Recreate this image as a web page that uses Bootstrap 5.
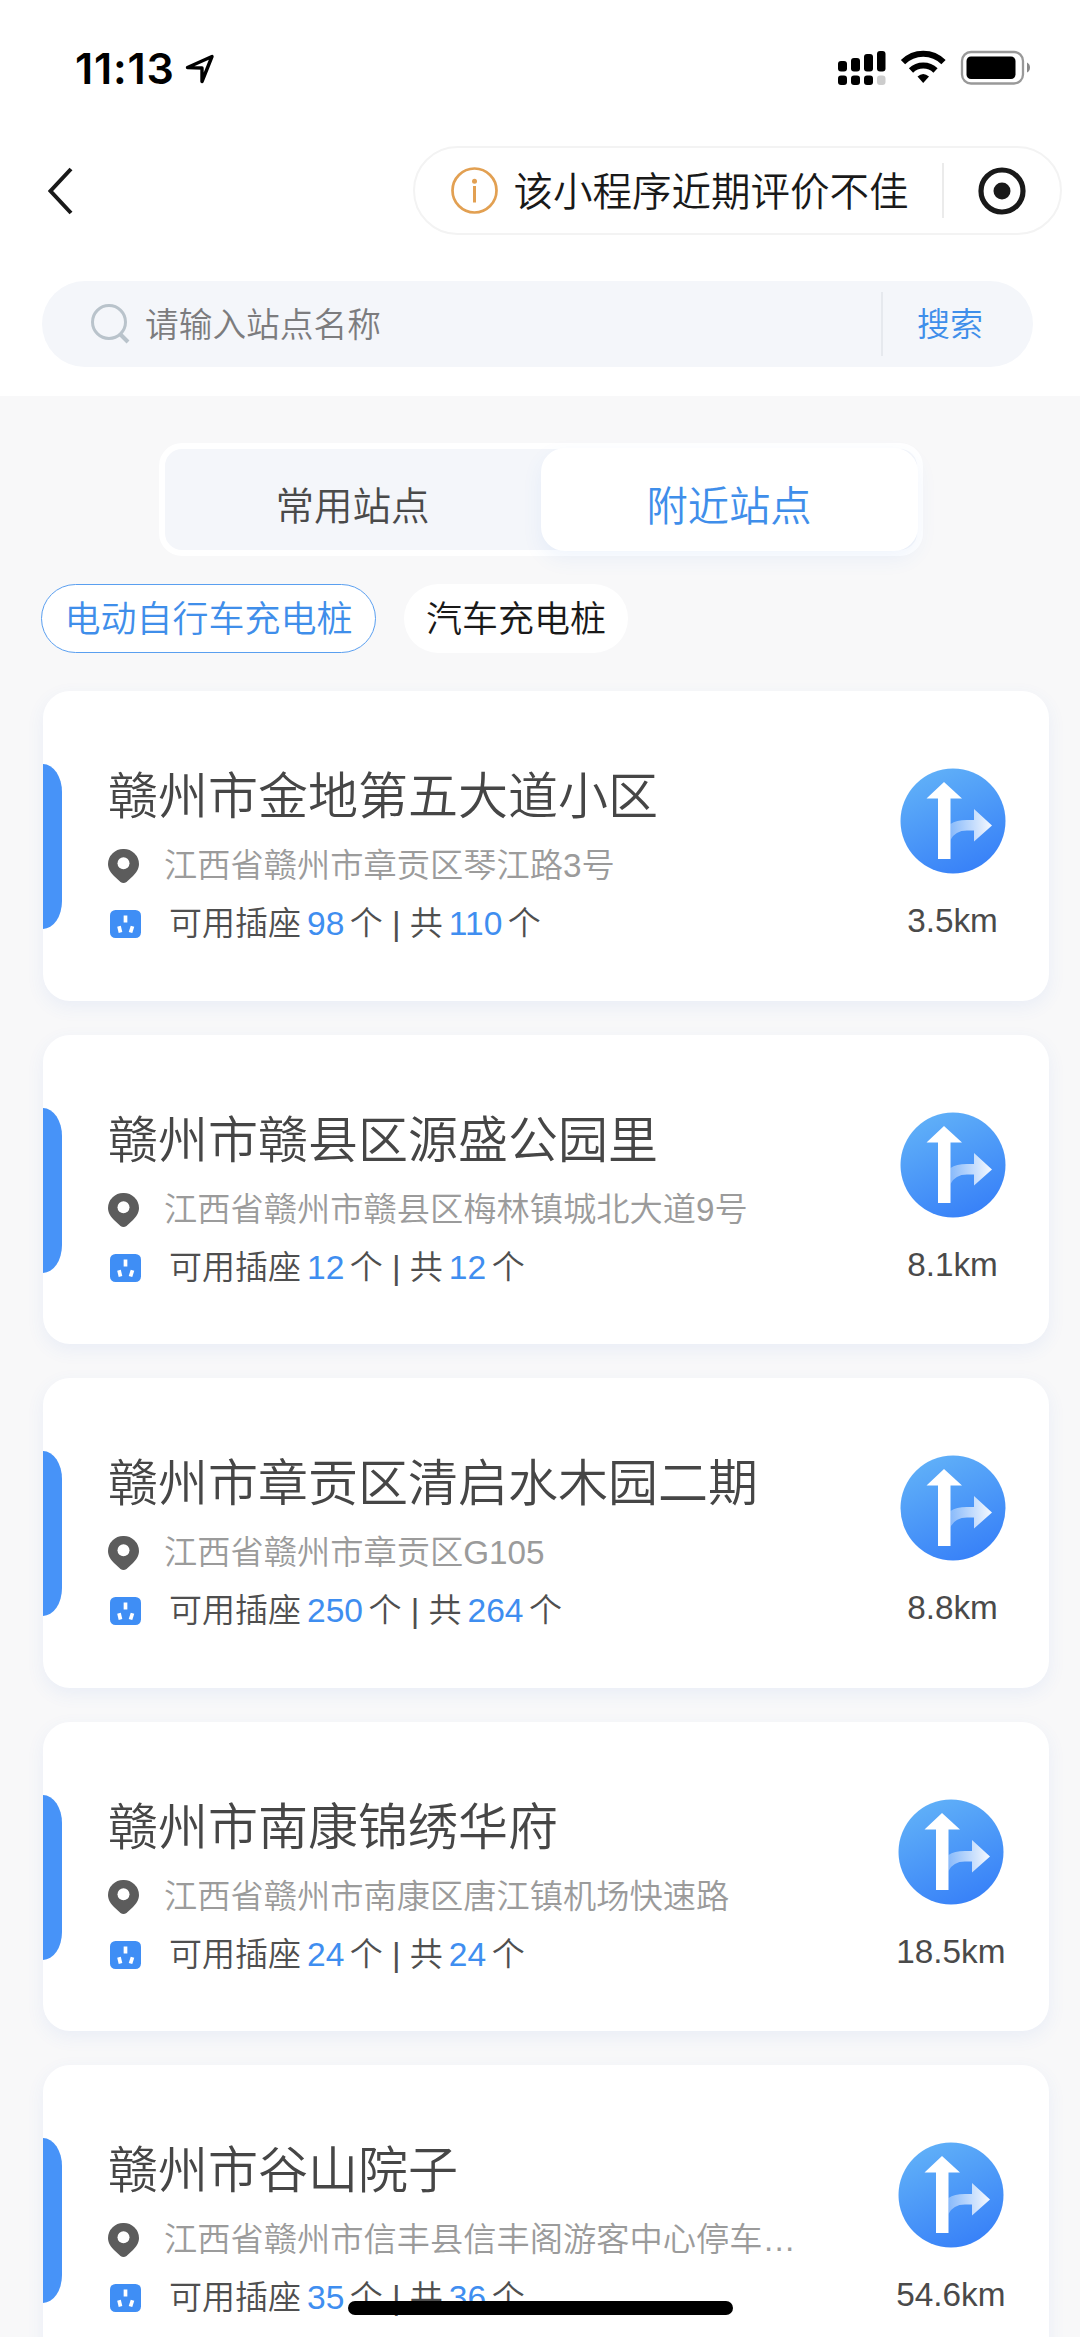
<!DOCTYPE html>
<html lang="zh-CN">
<head>
<meta charset="utf-8">
<meta name="viewport" content="width=device-width, initial-scale=1">
<title>附近站点</title>
<link href="https://cdn.jsdelivr.net/npm/bootstrap@5.3.0/dist/css/bootstrap.min.css" rel="stylesheet">
<style>
html,body{height:2337px;overflow:hidden}
body{background:#f8f8f9;font-family:"Liberation Sans","Noto Sans CJK SC",sans-serif;font-weight:350;color:#4a4a4a;width:1080px}
svg{display:block;flex:none}
.top-area{height:396px}
.status-row{height:136px;padding:0 49.5px 0 75px}
.clock{font:600 43px/50px Inter,sans-serif;letter-spacing:.8px;color:#000}
.nav-arrow{margin-left:10px}
.title-row{height:109px;padding:0 18.5px 0 48px}
.capsule{width:649px;height:89px;border:2px solid #f3f3f3;border-radius:45px;padding-left:36px;color:#191919}
.capsule-text{font-size:39.5px;line-height:50px;margin-left:16px;width:398px;padding-top:2px}
.capsule-line{width:2px;height:55px;background:#ebebeb;margin-left:30px}
.capsule-dot{margin-left:34px}
.search-box{margin:36px 47px 0 42px;height:86px;border-radius:43px;background:#f4f6fa;padding-left:49px;font-size:33.7px;line-height:50px}
.search-hint{color:#7c7c7e;margin-left:15px;padding-top:2px}
.search-line{width:2px;height:64px;background:#e6e9ee}
.search-go{width:150px;padding:2px 0 0 34px;color:#3f8eea;font-size:33px}
.tab-box{width:764px;height:113px;margin:47px 0 0 158.5px;border:6px solid #fff;border-radius:23px;background:#f4f6fa}
.tab-item{font-size:38.5px;line-height:50px;padding-top:15px}
.tab-on{width:377px;height:103px;margin-right:-1px;border-radius:24px;background:#fff;color:#3f8eea;font-size:41.3px;box-shadow:0 8px 20px rgba(60,130,235,.08)}
.pill-row{margin:28px 0 0 41px;gap:28px}
.pill{height:69px;border-radius:35px;background:#fff;color:#191919;font-size:36px;line-height:50px;width:224px;padding-top:2px}
.pill-on{width:335px;border:1.6px solid #5a9ff0;color:#3f8eea}
.station-list{margin:38px 31.5px 0 43px;gap:34px}
.station{height:309.5px;border-radius:27px;background:#fff;box-shadow:0 6px 18px rgba(60,110,220,.08);flex:none;padding-right:43px}
.station-mark{width:19px;height:165px;margin-top:73px;background:#4793f8;border-radius:0 19px 19px 0/0 28px 28px 0}
.station-info{margin-left:46px;padding-top:76px;width:720px}
.station-name{font-size:50px;line-height:60px;color:#464646}
.station-addr{font-size:33.25px;line-height:40px;color:#9b9b9b;margin-top:19px}
.station-addr span{margin-left:25px}
.station-sock{font-size:33px;line-height:40px;color:#4f4f4f;margin-top:18px;padding-left:2px}
.station-sock span{margin-left:28px;white-space:pre}
.station-sock b{font-weight:400;font-size:33.6px;color:#3f8ef0;margin:0 5.5px 0 6px}
.station-go{min-width:106px;padding-top:77px;font-size:33.3px;line-height:40px}
.station-go div{margin-top:27px}
.home-bar{position:absolute;left:348px;top:2301px;width:385px;height:14px;border-radius:7px;background:#000}
</style>
<script src="https://cdn.jsdelivr.net/npm/bootstrap@5.3.0/dist/js/bootstrap.bundle.min.js"></script>
</head>
<body class="position-relative m-0">
<svg width="0" height="0" class="position-absolute">
  <defs>
    <linearGradient id="disc" x1=".25" y1="0" x2=".7" y2="1"><stop offset="0" stop-color="#61b1f8"/><stop offset="1" stop-color="#3780f8"/></linearGradient>
    <linearGradient id="turn" x1="0" y1="0" x2="1" y2="0"><stop offset="0" stop-color="#fff" stop-opacity=".35"/><stop offset="1" stop-color="#fff" stop-opacity=".95"/></linearGradient>
    <symbol id="route" viewBox="0 0 106 106">
      <circle cx="53" cy="53" r="52.5" fill="url(#disc)"/>
      <path d="M44 14 62 30.5H50.5V91H38V30.5H26.500Z" fill="#fff"/>
      <path d="M50.500 56Q56 52 67 52H74V41L92 57.500 74 73.500V62.500H67Q55 62.500 50.500 72Z" fill="url(#turn)"/>
    </symbol>
    <symbol id="pin" viewBox="0 0 31 34">
      <path d="M15.500 0A15.300 15.300 0 0 1 31 15C31 20 28 24 25 27L18.500 33Q15.500 35 12.500 33L6 27C3 24 0 20 0 15A15.300 15.300 0 0 1 15.500 0Z" fill="#5c5c5c"/><circle cx="15.500" cy="14.300" r="6" fill="#fff"/>
    </symbol>
    <symbol id="socket" viewBox="0 0 31 28">
      <rect width="31" height="28" rx="5.500" fill="#3f8ef5"/>
      <g stroke="#fff" stroke-width="3.700"><path d="M15.500 5.500V12.500M9 16.200 10.500 22.500M22.500 16.200 20.500 22.500"/></g>
    </symbol>
  </defs>
</svg>

<header class="top-area bg-white overflow-hidden">
  <div class="status-row d-flex align-items-center">
    <span class="clock">11:13</span>
    <svg class="nav-arrow" width="30" height="31" viewBox="0 0 30 31"><path d="M2.500 14.500 27 3.500 17 28.500V15Z" fill="none" stroke="#000" stroke-width="3.400" stroke-linejoin="round"/></svg>
    <svg class="ms-auto" width="193" height="36" viewBox="837 51 193 36">
      <g><rect x="837" y="62" width="9" height="10.500" rx="3"/><rect x="850" y="59" width="9" height="13.500" rx="3"/><rect x="863" y="55" width="9" height="17.500" rx="3"/><rect x="876" y="52" width="8.500" height="20.500" rx="3"/><rect x="837" y="76.500" width="9" height="9.500" rx="3"/><rect x="850" y="76.500" width="9" height="9.500" rx="3"/><rect x="863" y="76.500" width="9" height="9.500" rx="3"/><rect x="876" y="76.500" width="8.500" height="9.500" rx="3" fill="#ccc"/></g>
      <g fill="none" stroke="#000" stroke-width="6"><path d="M902 63.200A28.500 28.500 0 0 1 942.500 63.200"/><path d="M910 71.500A17.500 17.500 0 0 1 934.500 71.500"/></g>
      <path d="M916.500 77.500Q922.200 72.500 928 77.500L922.200 84Z"/>
      <rect x="961" y="53" width="61" height="31.500" rx="9" fill="none" stroke="#999" stroke-width="2.300"/><rect x="965.500" y="57.500" width="49" height="22.500" rx="4.500"/><path d="M1026 63.500Q1029 65 1029 68.500T1026 73.500Z" fill="#888"/>
    </svg>
  </div>
  <div class="title-row d-flex align-items-center justify-content-between">
    <svg width="26" height="48" viewBox="0 0 26 48"><path d="M23 2 2.500 24 23 46" fill="none" stroke="#191919" stroke-width="4"/></svg>
    <div class="capsule d-flex align-items-center">
      <svg width="47" height="47" viewBox="0 0 47 47"><circle cx="23.500" cy="23.500" r="22" fill="none" stroke="#e2a052" stroke-width="2.700"/><circle cx="23.500" cy="14.300" r="2.500" fill="#e2a052"/><path d="M23.500 19V35.500" stroke="#e2a052" stroke-width="3"/></svg>
      <span class="capsule-text text-nowrap">该小程序近期评价不佳</span>
      <span class="capsule-line"></span>
      <svg class="capsule-dot" width="48" height="48" viewBox="0 0 48 48"><circle cx="24" cy="24" r="21" fill="none" stroke="#191919" stroke-width="5.200"/><circle cx="24" cy="24" r="8.500" fill="#191919"/></svg>
    </div>
  </div>
  <div class="search-box d-flex align-items-center">
    <svg width="39" height="42" viewBox="0 0 39 42"><circle cx="18" cy="19" r="16.500" fill="none" stroke="#b9c3cb" stroke-width="3"/><path d="M29 31 37 39" stroke="#b9c3cb" stroke-width="4"/></svg>
    <span class="search-hint">请输入站点名称</span>
    <span class="search-line ms-auto"></span>
    <span class="search-go">搜索</span>
  </div>
</header>

<main>
  <div class="tab-box d-flex align-items-center">
    <div class="tab-item flex-fill text-center">常用站点</div>
    <div class="tab-item tab-on d-flex align-items-center justify-content-center">附近站点</div>
  </div>
  <div class="pill-row d-flex">
    <div class="pill pill-on d-flex align-items-center justify-content-center">电动自行车充电桩</div>
    <div class="pill d-flex align-items-center justify-content-center">汽车充电桩</div>
  </div>

  <div class="station-list d-flex flex-column">
    <section class="station d-flex">
      <div class="station-mark"></div>
      <div class="station-info">
        <div class="station-name">赣州市金地第五大道小区</div>
        <div class="station-addr d-flex align-items-center"><svg width="31" height="34"><use href="#pin"/></svg><span>江西省赣州市章贡区琴江路3号</span></div>
        <div class="station-sock d-flex align-items-center"><svg width="31" height="28"><use href="#socket"/></svg><span>可用插座<b>98</b>个 | 共<b>110</b>个</span></div>
      </div>
      <div class="station-go ms-auto d-flex flex-column align-items-center"><svg width="106" height="106"><use href="#route"/></svg><div>3.5km</div></div>
    </section>
    <section class="station d-flex">
      <div class="station-mark"></div>
      <div class="station-info">
        <div class="station-name">赣州市赣县区源盛公园里</div>
        <div class="station-addr d-flex align-items-center"><svg width="31" height="34"><use href="#pin"/></svg><span>江西省赣州市赣县区梅林镇城北大道9号</span></div>
        <div class="station-sock d-flex align-items-center"><svg width="31" height="28"><use href="#socket"/></svg><span>可用插座<b>12</b>个 | 共<b>12</b>个</span></div>
      </div>
      <div class="station-go ms-auto d-flex flex-column align-items-center"><svg width="106" height="106"><use href="#route"/></svg><div>8.1km</div></div>
    </section>
    <section class="station d-flex">
      <div class="station-mark"></div>
      <div class="station-info">
        <div class="station-name">赣州市章贡区清启水木园二期</div>
        <div class="station-addr d-flex align-items-center"><svg width="31" height="34"><use href="#pin"/></svg><span>江西省赣州市章贡区G105</span></div>
        <div class="station-sock d-flex align-items-center"><svg width="31" height="28"><use href="#socket"/></svg><span>可用插座<b>250</b>个 | 共<b>264</b>个</span></div>
      </div>
      <div class="station-go ms-auto d-flex flex-column align-items-center"><svg width="106" height="106"><use href="#route"/></svg><div>8.8km</div></div>
    </section>
    <section class="station d-flex">
      <div class="station-mark"></div>
      <div class="station-info">
        <div class="station-name">赣州市南康锦绣华府</div>
        <div class="station-addr d-flex align-items-center"><svg width="31" height="34"><use href="#pin"/></svg><span>江西省赣州市南康区唐江镇机场快速路</span></div>
        <div class="station-sock d-flex align-items-center"><svg width="31" height="28"><use href="#socket"/></svg><span>可用插座<b>24</b>个 | 共<b>24</b>个</span></div>
      </div>
      <div class="station-go ms-auto d-flex flex-column align-items-center"><svg width="106" height="106"><use href="#route"/></svg><div>18.5km</div></div>
    </section>
    <section class="station d-flex">
      <div class="station-mark"></div>
      <div class="station-info">
        <div class="station-name">赣州市谷山院子</div>
        <div class="station-addr d-flex align-items-center"><svg width="31" height="34"><use href="#pin"/></svg><span>江西省赣州市信丰县信丰阁游客中心停车…</span></div>
        <div class="station-sock d-flex align-items-center"><svg width="31" height="28"><use href="#socket"/></svg><span>可用插座<b>35</b>个 | 共<b>36</b>个</span></div>
      </div>
      <div class="station-go ms-auto d-flex flex-column align-items-center"><svg width="106" height="106"><use href="#route"/></svg><div>54.6km</div></div>
    </section>
  </div>
</main>
<div class="home-bar"></div>
</body>
</html>
